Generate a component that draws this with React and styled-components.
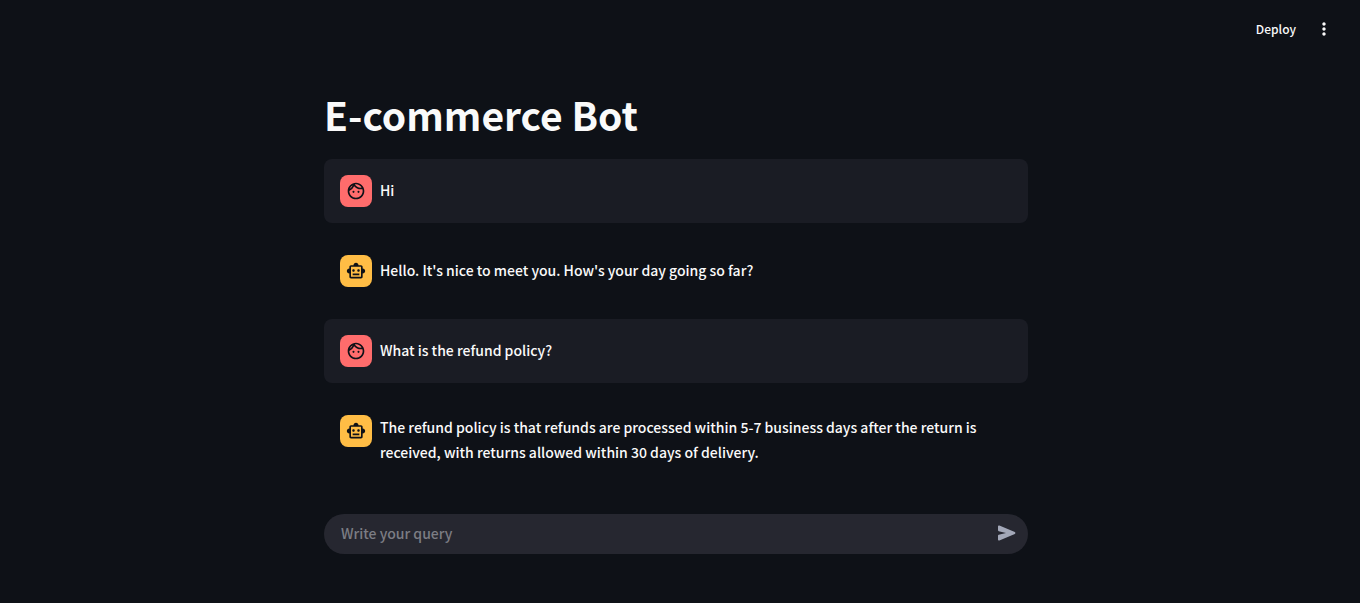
import React from "react";
import styled, { createGlobalStyle } from "styled-components";
import { MdOutlineFace, MdOutlineSmartToy, MdMoreVert } from "react-icons/md";

const GlobalStyle = createGlobalStyle`
  *, *::before, *::after { box-sizing: border-box; }
  body {
    margin: 0;
    background: #0e1117;
    color: #fafafa;
    font-family: "Source Sans Pro", "Noto Sans CJK SC", sans-serif;
    font-size: 14px;
    font-weight: 500;
  }
  button, input { font: inherit; color: inherit; }
`;

const Page = styled.div`
  min-height: 100vh;
  display: flex;
  flex-direction: column;
`;

const Header = styled.header`
  height: 58px;
  flex: none;
  display: flex;
  align-items: center;
  justify-content: flex-end;
  gap: 6px;
  padding: 0 20px;
`;

const HeaderButton = styled.button`
  display: flex;
  align-items: center;
  justify-content: center;
  height: 32px;
  padding: 0 12px 2px;
  border: 0;
  border-radius: 8px;
  background: transparent;
  font-size: 12px;
  cursor: pointer;
`;

const MenuButton = styled(HeaderButton)`
  padding: 0 6px 0 0;
`;

const Main = styled.main`
  flex: 1;
  width: 100%;
  max-width: 744px;
  margin: 0 auto;
  padding: 30px 24px 48px 16px;
  display: flex;
  flex-direction: column;
`;

const Title = styled.h1`
  margin: 0;
  padding: 0 0 18px;
  font-size: 39px;
  line-height: 53px;
  font-weight: 700;
`;

const Messages = styled.div`
  display: flex;
  flex-direction: column;
  gap: 16px;
`;

const Message = styled.article`
  display: flex;
  align-items: flex-start;
  gap: 8px;
  padding: 16px;
  border-radius: 8px;
  background: ${(p) => (p.$user ? "#1a1c24" : "transparent")};
`;

const Avatar = styled.div`
  flex: none;
  width: 32px;
  height: 32px;
  display: flex;
  align-items: center;
  justify-content: center;
  border-radius: 8px;
  color: #0e1117;
  background: ${(p) => (p.$user ? "#ff6c6c" : "#ffbd45")};
`;

const MessageText = styled.p`
  flex: 1;
  align-self: center;
  margin: 0;
  padding-bottom: 1px;
  line-height: 25px;
`;

const Composer = styled.form`
  display: flex;
  align-items: center;
  height: 40px;
  margin-top: 32px;
  padding: 0 9px 2px 17px;
  border-radius: 20px;
  background: #262730;
`;

const QueryInput = styled.input`
  flex: 1;
  min-width: 0;
  padding: 0;
  border: 0;
  outline: 0;
  background: transparent;
  &::placeholder { color: #7c7d84; opacity: 1; }
`;

const SendButton = styled.button`
  display: flex;
  padding: 0;
  border: 0;
  background: transparent;
  color: #a3a8b8;
  cursor: pointer;
`;

const SendIcon = () => (
  <svg width="24" height="24" viewBox="0 0 24 24" fill="currentColor" aria-hidden="true">
    <path d="M3 5.51v3.71c0 .46.31.86.76.97L11 12l-7.24 1.81c-.45.11-.76.51-.76.97v3.71c0 .72.73 1.2 1.39.92l15.42-6.49c.82-.34.82-1.5 0-1.84L4.39 4.58C3.73 4.31 3 4.79 3 5.51z" />
  </svg>
);

const messages = [
  { user: true, text: "Hi" },
  { user: false, text: "Hello. It's nice to meet you. How's your day going so far?" },
  { user: true, text: "What is the refund policy?" },
  {
    user: false,
    text: "The refund policy is that refunds are processed within 5-7 business days after the return is received, with returns allowed within 30 days of delivery.",
  },
];

export default function App() {
  return (
    <Page>
      <GlobalStyle />
      <Header>
        <HeaderButton type="button">Deploy</HeaderButton>
        <MenuButton type="button" aria-label="Main menu">
          <MdMoreVert size={20} />
        </MenuButton>
      </Header>
      <Main>
        <Title>E-commerce Bot</Title>
        <Messages>
          {messages.map((m, i) => (
            <Message key={i} $user={m.user}>
              <Avatar $user={m.user}>
                {m.user ? <MdOutlineFace size={20} /> : <MdOutlineSmartToy size={20} />}
              </Avatar>
              <MessageText>{m.text}</MessageText>
            </Message>
          ))}
        </Messages>
        <Composer onSubmit={(e) => e.preventDefault()}>
          <QueryInput type="text" aria-label="Write your query" placeholder="Write your query" />
          <SendButton type="submit" aria-label="Send">
            <SendIcon />
          </SendButton>
        </Composer>
      </Main>
    </Page>
  );
}
